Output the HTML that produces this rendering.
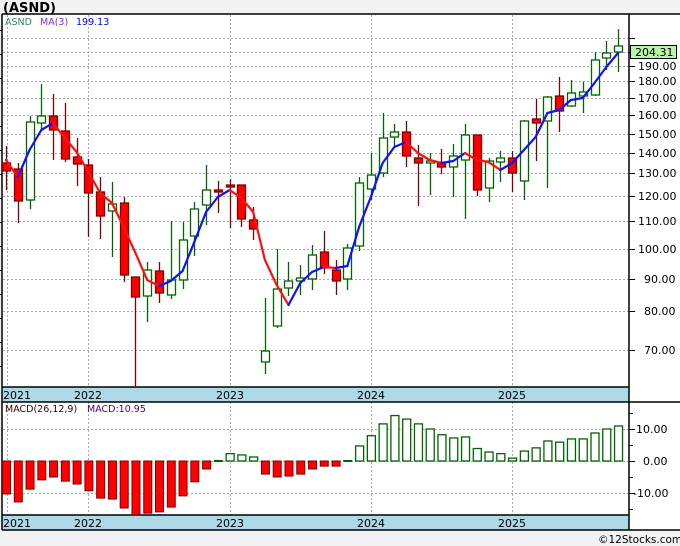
<!DOCTYPE html>
<html><head><meta charset="utf-8"><style>
html,body{margin:0;padding:0;background:#f2f2f2;width:680px;height:546px;overflow:hidden}
svg{display:block}
text{font-family:"DejaVu Sans","Liberation Sans",sans-serif}
</style></head><body>
<svg id="s" width="680" height="546" xmlns="http://www.w3.org/2000/svg">
<rect x="0" y="0" width="680" height="546" fill="#f2f2f2"/>
<rect x="2" y="14" width="678" height="516" fill="#fff"/>
<g id="grid" stroke="#aaa" stroke-dasharray="2,2" stroke-width="1"></g>
<rect x="2" y="387" width="627" height="15" fill="#add8e6"/>
<rect x="2" y="515" width="627" height="15" fill="#add8e6"/>
<g stroke="#000" stroke-width="1.5">
<line x1="2" y1="14" x2="680" y2="14"/>
<line x1="2" y1="387" x2="629" y2="387"/>
<line x1="2" y1="402" x2="680" y2="402"/>
<line x1="2" y1="515" x2="629" y2="515"/>
<line x1="2" y1="530" x2="680" y2="530"/>
<line x1="2" y1="14" x2="2" y2="530"/>
<line x1="629" y1="14" x2="629" y2="530"/>
</g>
<g id="ticks" stroke="#000" stroke-width="1"></g>
<g id="macd"></g>
<g id="cand"></g>
<g id="ma" stroke-width="2.2" fill="none" stroke-linecap="round"></g>
<text x="3" y="12" font-size="13" font-weight="bold" fill="#000">(ASND)</text>
<text x="5" y="25" font-size="9.5" fill="#2e8b57">ASND</text>
<text x="40" y="25" font-size="9.5" fill="#8a2be2">MA(3)</text>
<text x="76" y="25" font-size="9.5" fill="#0000ff">199.13</text>
<text x="5" y="412" font-size="9.5" fill="#400000">MACD(26,12,9)</text>
<text x="87" y="412" font-size="9.5" fill="#4b0082">MACD:10.95</text>
<g font-size="11" fill="#000">
<text x="3" y="399">2021</text><text x="74" y="399">2022</text><text x="216" y="399">2023</text><text x="357" y="399">2024</text><text x="498" y="399">2025</text>
<text x="3" y="527">2021</text><text x="74" y="527">2022</text><text x="216" y="527">2023</text><text x="357" y="527">2024</text><text x="498" y="527">2025</text>
</g>
<g font-size="11" fill="#000">
<text x="638" y="70">190.00</text><text x="638" y="85">180.00</text><text x="638" y="102">170.00</text>
<text x="638" y="119">160.00</text><text x="638" y="138">150.00</text><text x="638" y="157">140.00</text>
<text x="638" y="177">130.00</text><text x="638" y="200">120.00</text><text x="638" y="225">110.00</text>
<text x="638" y="253">100.00</text><text x="644" y="283">90.00</text><text x="644" y="315">80.00</text>
<text x="644" y="354">70.00</text>
<text x="636" y="433">10.00</text><text x="643" y="465">0.00</text><text x="633" y="497">-10.00</text>
</g>
<rect x="630.5" y="45.5" width="46" height="13" fill="#b8f5a8" stroke="#000"/>
<text x="635" y="56" font-size="11" fill="#000">204.31</text>
<text x="598" y="543" font-size="10.5" fill="#000">©12Stocks.com</text>
</svg>
<script>
var NS="http://www.w3.org/2000/svg";
function el(p,t,a){var e=document.createElementNS(NS,t);for(var k in a)e.setAttribute(k,a[k]);p.appendChild(e);return e;}
var g=document.getElementById('grid');
[7,88,230,371,512].forEach(function(x){el(g,'line',{x1:x+.5,y1:15,x2:x+.5,y2:387});el(g,'line',{x1:x+.5,y1:402,x2:x+.5,y2:515});});
var py=[38,52,66,81,98,115,134,153,173,196,221,249,279,311,350];
py.forEach(function(y){el(g,'line',{x1:3,y1:y+.5,x2:629,y2:y+.5});});
[429,461,493].forEach(function(y){el(g,'line',{x1:3,y1:y+.5,x2:629,y2:y+.5});});
var tk=document.getElementById('ticks');
py.forEach(function(y){el(tk,'line',{x1:629,y1:y+.5,x2:635,y2:y+.5});});
for(var y=413;y<515;y+=16){el(tk,'line',{x1:629,y1:y+.5,x2:(y==429||y==461||y==493)?635:633,y2:y+.5});}
for(var y=30;y<387;y+=24){el(tk,'line',{x1:0,y1:y+.5,x2:2,y2:y+.5});}
function X(i){return 6+11.77*i;}
var m=[-10.3,-12.8,-8.8,-5.9,-5.0,-6.3,-7.2,-9.3,-11.6,-11.9,-14.7,-16.8,-16.3,-15.9,-14.4,-10.9,-6.5,-2.5,0.3,2.3,1.9,1.25,-4.1,-5.0,-4.7,-4.1,-2.5,-1.6,-1.6,0,4.7,7.9,11.6,14.2,13.1,11.6,10,8.2,7.2,7.5,3.9,2.8,2.3,0.9,3.1,4.1,6.25,5.9,6.9,6.9,8.75,10,10.95];
var mg=document.getElementById('macd');
m.forEach(function(v,i){var x=X(i);var h=Math.abs(v)*3.2;
 if(v<0){el(mg,'rect',{x:x-4+.5,y:461,width:8,height:Math.max(h,1),fill:'#ff0000',stroke:'#800000','stroke-width':1});}
 else if(h<2){el(mg,'rect',{x:x-4,y:460,width:9,height:2,fill:'#006400'});}
 else{el(mg,'rect',{x:x-4+.5,y:461-h,width:8,height:h,fill:'#fff',stroke:'#006400','stroke-width':1.3});}
});
var c=[[163,171,146,190,0],[169,201,163,223,0],[122,200,116,209,1],[116,123,84,130,1],[116,130,94,160,0],[131,159,103,162,0],[157,164,138,186,0],[165,193,159,237,0],[192,216,177,239,0],[204,211,182,257,1],[203,275,197,282,0],[277,297,277,387,0],[270,296,262,322,1],[271,293,262,303,0],[280,295,221,299,1],[240,280,222,289,1],[209,236,202,256,1],[190,205,165,225,1],[190,192,181,213,0],[185,187,179,228,0],[185,219,185,227,0],[220,229,207,240,0],[351,362,298,374,1],[289,326,249,328,1],[281,288,262,296,1],[278,281,265,295,1],[255,279,245,290,1],[252,268,231,274,0],[270,281,260,295,0],[248,279,244,290,1],[183,246,177,251,1],[175,189,153,200,1],[138,173,113,177,1],[132,137,124,147,1],[132,156,121,167,0],[158,163,145,206,0],[161,163,153,195,1],[163,167,149,174,0],[156,167,144,197,1],[135,160,124,219,1],[135,190,135,196,0],[161,188,158,202,1],[158,162,151,182,1],[158,173,151,192,0],[121,181,120,200,1],[119,123,99,161,0],[97,121,96,188,1],[96,111,77,132,0],[93,106,80,107,1],[92,96,82,113,1],[60,95,52,96,1],[53,58,41,70,1],[46,52,29,72,1]];
var cg=document.getElementById('cand');
c.forEach(function(d,i){var x=Math.round(X(i))+.5;var col=d[4]?'#006400':'#800000';
 el(cg,'line',{x1:x,y1:d[2],x2:x,y2:d[3],stroke:col,'stroke-width':1.3});
 el(cg,'rect',{x:x-4,y:d[0],width:8,height:Math.max(d[1]-d[0],2),fill:d[4]?'#fff':'#ff0000',stroke:col,'stroke-width':1.3});
});
var ma=[160,177,150,130,123,138,152,172,193,203,227,253,280,286,281,271,242,212,197,190,198,212,260,285,305,283,272,267,268,266,227,197,163,147,142,153,160,163,161,153,160,162,170,163,150,137,113,110,100,98,83,67,53];
var mgl=document.getElementById('ma');
for(var i=0;i<ma.length-1;i++){el(mgl,'line',{x1:X(i),y1:ma[i],x2:X(i+1),y2:ma[i+1],stroke:ma[i+1]<ma[i]?'#1010ff':'#ff1010'});}
</script>
</body></html>
